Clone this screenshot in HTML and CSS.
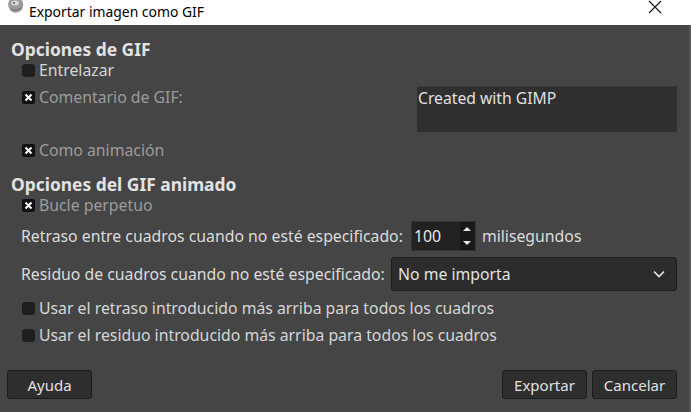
FILE: index.html
```html
<!DOCTYPE html>
<html lang="es">
<head>
<meta charset="utf-8">
<title>Exportar imagen como GIF</title>
<link rel="stylesheet" href="styles.css">
</head>
<body>
<div class="window">
  <div class="titlebar">
    <svg class="app-icon" width="18" height="16" viewBox="0 0 18 16">
      <path d="M2 2 Q4 -2 9 0 Q15 -1 16 4 Q17 10 12 13 Q6 15 3 11 Q0 7 2 2 Z" fill="#9a9a9a"/>
      <ellipse cx="8" cy="4" rx="4" ry="2.5" fill="#d8d8d8"/>
      <circle cx="7" cy="4" r="1" fill="#555"/>
      <path d="M4 10 Q9 13 14 9" stroke="#777" stroke-width="1.2" fill="none"/>
    </svg>
    <span class="title">Exportar imagen como GIF</span>
    <svg class="close" width="14" height="14" viewBox="0 0 14 14">
      <path d="M1 1 L13 13 M13 1 L1 13" stroke="#111" stroke-width="1.1"/>
    </svg>
  </div>
  <div class="body">
    <div class="heading h1">Opciones de GIF</div>
    <div class="check-row">
      <span class="cb"></span><span class="lbl">Entrelazar</span>
    </div>
    <div class="comment-row">
      <div class="check-row top">
        <span class="cb on"><svg width="9" height="9" viewBox="0 0 9 9"><path d="M1.5 1.5 L7.5 7.5 M7.5 1.5 L1.5 7.5" stroke="#fff" stroke-width="2"/></svg></span><span class="lbl dim">Comentario de GIF:</span>
      </div>
      <div class="textarea">Created with GIMP</div>
    </div>
    <div class="check-row anim">
      <span class="cb on"><svg width="9" height="9" viewBox="0 0 9 9"><path d="M1.5 1.5 L7.5 7.5 M7.5 1.5 L1.5 7.5" stroke="#fff" stroke-width="2"/></svg></span><span class="lbl dim">Como animación</span>
    </div>
    <div class="heading h2">Opciones del GIF animado</div>
    <div class="check-row">
      <span class="cb on"><svg width="9" height="9" viewBox="0 0 9 9"><path d="M1.5 1.5 L7.5 7.5 M7.5 1.5 L1.5 7.5" stroke="#fff" stroke-width="2"/></svg></span><span class="lbl dim">Bucle perpetuo</span>
    </div>
    <div class="field-row delay">
      <span class="flabel">Retraso entre cuadros cuando no esté especificado:</span>
      <div class="spin">
        <span class="spin-val">100</span>
        <span class="spin-btns">
          <svg width="10" height="8" viewBox="0 0 10 8"><path d="M1 6 L5 2 L9 6 Z" fill="#e8e8e8"/></svg>
          <svg width="10" height="8" viewBox="0 0 10 8"><path d="M1 2 L5 6 L9 2 Z" fill="#e8e8e8"/></svg>
        </span>
      </div>
      <span class="flabel">milisegundos</span>
    </div>
    <div class="field-row dispose">
      <span class="flabel">Residuo de cuadros cuando no esté especificado:</span>
      <div class="combo">
        <span>No me importa</span>
        <svg width="14" height="10" viewBox="0 0 14 10"><path d="M2 2.5 L7 7.5 L12 2.5" stroke="#e8e8e8" stroke-width="1.6" fill="none"/></svg>
      </div>
    </div>
    <div class="check-row use1">
      <span class="cb"></span><span class="lbl">Usar el retraso introducido más arriba para todos los cuadros</span>
    </div>
    <div class="check-row use2">
      <span class="cb"></span><span class="lbl">Usar el residuo introducido más arriba para todos los cuadros</span>
    </div>
    <div class="buttons">
      <button class="btn help">Ayuda</button>
      <span class="spacer"></span>
      <button class="btn export">Exportar</button>
      <button class="btn cancel">Cancelar</button>
    </div>
  </div>
</div>
</body>
</html>
```
FILE: styles.css
```css
* { box-sizing: border-box; }
html, body { margin: 0; padding: 0; }
body {
  width: 691px;
  height: 412px;
  overflow: hidden;
  font-family: "Noto Sans", "Open Sans", "DejaVu Sans", sans-serif;
  font-size: 15.8px;
}
.window {
  width: 691px;
  height: 412px;
  display: flex;
  flex-direction: column;
}
.titlebar {
  height: 25px;
  background: #ffffff;
  display: flex;
  align-items: center;
  position: relative;
  color: #000;
  font-size: 13.9px;
}
.app-icon {
  margin-left: 7px;
  margin-top: -12px;
  flex: none;
}
.title {
  margin-left: 4px;
  margin-top: -2px;
}
.close {
  position: absolute;
  left: 648px;
  top: 0px;
}
.body {
  flex: 1;
  background: #454545;
  border-right: 2px solid #575757;
  display: flex;
  flex-direction: column;
  padding: 14px 12px 13px 11px;
  color: #dcdcdc;
}
.heading {
  height: 20px;
  line-height: 20px;
  font-weight: bold;
  font-size: 17.4px;
  color: #e2e2e2;
}
.check-row {
  height: 22px;
  display: flex;
  align-items: center;
  padding-left: 11px;
}
.cb {
  width: 13px;
  height: 13px;
  border-radius: 3px;
  background: #1f1f1f;
  flex: none;
  display: flex;
  align-items: center;
  justify-content: center;
}
.cb.on { background: #111; border-radius: 2px; }
.lbl {
  margin-left: 4px;
  color: #d6d6d6;
}
.lbl.dim { color: #9c9c9c; }
.comment-row {
  display: flex;
  justify-content: space-between;
  align-items: flex-start;
  margin-top: 5px;
}
.textarea {
  width: 260px;
  height: 46px;
  background: #2f2f2f;
  border-top: 1px solid #3a3a3a;
  color: #e0e0e0;
  font-size: 15.7px;
  line-height: 22px;
  padding-left: 1px;
}
.check-row.anim { margin-top: 7px; }
.heading.h2 { margin-top: 13px; }
.field-row {
  display: flex;
  align-items: center;
  padding-left: 10px;
}
.flabel { color: #dcdcdc; }
.field-row.delay { margin-top: 5px; height: 30px; }
.spin {
  width: 65px;
  height: 30px;
  margin-left: 8px;
  margin-right: 6px;
  background: #222;
  border: 1px solid #333;
  display: flex;
  align-items: center;
  justify-content: space-between;
}
.spin-val { padding-left: 2px; color: #e6e6e6; }
.spin-btns {
  width: 15px;
  height: 28px;
  background: #191919;
  display: flex;
  flex-direction: column;
  align-items: center;
  justify-content: space-around;
}
.field-row.dispose { margin-top: 6px; height: 34px; }
.combo {
  margin-left: auto;
  width: 286px;
  height: 34px;
  background: #2c2c2c;
  border: 1px solid #1e1e1e;
  border-radius: 3px;
  display: flex;
  align-items: center;
  justify-content: space-between;
  padding: 0 10px 0 6px;
  color: #e2e2e2;
}
.check-row.use1 { margin-top: 6px; }
.check-row.use2 { margin-top: 5px; }
.buttons {
  margin-top: auto;
  display: flex;
  align-items: center;
  height: 29px;
  margin-left: -4px;
}
.spacer { flex: 1; }
.btn {
  height: 29px;
  background: #2e2e2e;
  border: 1px solid #1c1c1c;
  border-radius: 3px;
  color: #e0e0e0;
  font-family: "Noto Sans", "Open Sans", "DejaVu Sans", sans-serif;
  font-size: 15px;
  padding: 0;
}
.btn.help { width: 85px; }
.btn.export { width: 85px; }
.btn.cancel { width: 85px; margin-left: 5px; }
```
